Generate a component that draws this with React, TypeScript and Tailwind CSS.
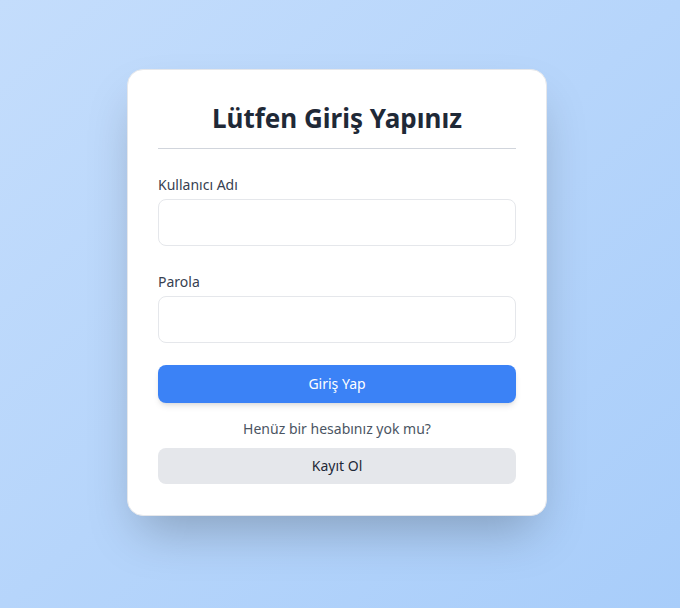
import React from "react";

export default function App() {
  return (
    <div
      className="min-h-screen w-full flex items-center justify-center bg-gradient-to-br from-[#c4ddfc] to-[#a8cdfa]"
      style={{ fontFamily: '"Noto Sans", "Open Sans", sans-serif' }}
    >
      <div className="w-[420px] mb-6 mr-1.5 bg-white rounded-2xl border border-gray-200 shadow-2xl px-[30px] pt-[30px] pb-[31px]">
        <h1 className="text-[26px] leading-9 font-bold text-[#1f2937] text-center pb-3 border-b border-gray-300">
          Lütfen Giriş Yapınız
        </h1>

        <form className="flex flex-col mt-6" onSubmit={(e) => e.preventDefault()}>
          <label className="text-sm leading-6 text-[#374151] mb-0.5">Kullanıcı Adı</label>
          <input className="h-[47px] w-full rounded-lg border border-gray-200 px-3 outline-none" />

          <label className="text-sm leading-6 text-[#374151] mb-0.5 mt-6">Parola</label>
          <input type="password" className="h-[47px] w-full rounded-lg border border-gray-200 px-3 outline-none" />

          <button className="mt-[22px] h-[38px] w-full rounded-lg bg-[#3b82f6] text-white text-sm shadow-md">
            Giriş Yap
          </button>

          <p className="text-center text-sm leading-6 text-[#4b5563] mt-[14px]">
            Henüz bir hesabınız yok mu?
          </p>
          <button type="button" className="mt-[7px] h-[36px] w-full rounded-lg bg-[#e5e7eb] text-[#1f2937] text-sm">
            Kayıt Ol
          </button>
        </form>
      </div>
    </div>
  );
}
